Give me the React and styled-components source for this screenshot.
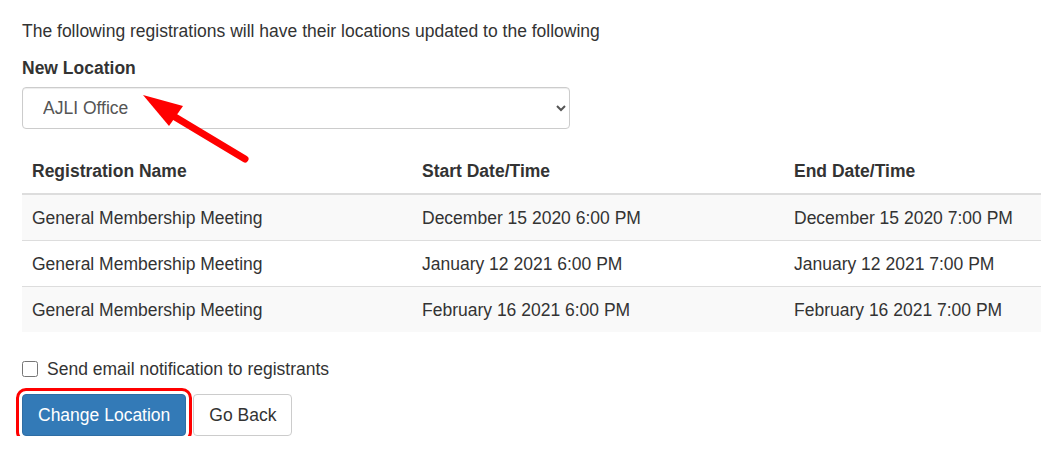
import React from "react";
import styled, { createGlobalStyle } from "styled-components";

const GlobalStyle = createGlobalStyle`
  html, body {
    margin: 0;
    background: #fff;
    color: #333;
    font-family: "Liberation Sans", Arial, Helvetica, sans-serif;
    font-size: 17.5px;
    line-height: 24px;
  }
`;

const Page = styled.div`
  position: relative;
  padding: 19px 0 0 22px;
  overflow: hidden;
`;

const Intro = styled.p`
  margin: 0 0 13px;
`;

const FormGroup = styled.div`
  margin-bottom: 18px;
`;

const Label = styled.label`
  display: block;
  font-weight: 700;
  margin-bottom: 7px;
`;

const Select = styled.select`
  display: block;
  width: 548px;
  height: 42px;
  padding: 0 12px 0 16px;
  border: 1px solid #ccc;
  border-radius: 4px;
  background: #fff;
  color: #555;
  font-family: inherit;
  font-size: 17.5px;
  box-shadow: inset 0 1px 1px rgba(0, 0, 0, 0.075);
`;

const Table = styled.table`
  width: 1060px;
  border-collapse: collapse;
  border-spacing: 0;
  margin-bottom: 25px;
  table-layout: fixed;
`;

const Th = styled.th`
  width: ${(p) => p.w || "auto"};
  text-align: left;
  font-weight: 700;
  padding: 12px 10px 10px;
  border-bottom: 2px solid #ddd;
  vertical-align: bottom;
`;

const Row = styled.tr`
  background: ${(p) => (p.striped ? "#f9f9f9" : "#fff")};
`;

const Td = styled.td`
  padding: 11px 10px 10px;
  border-top: ${(p) => (p.first ? "none" : "1px solid #ddd")};
  white-space: nowrap;
`;

const CheckRow = styled.label`
  display: flex;
  align-items: center;
  gap: 9px;
  margin-bottom: 13px;
`;

const Checkbox = styled.input`
  width: 16px;
  height: 16px;
  margin: 0;
`;

const Actions = styled.div`
  display: flex;
  gap: 7px;
`;

const Button = styled.button`
  height: 42px;
  padding: 0 15px;
  font-family: inherit;
  font-size: 17.5px;
  line-height: 24px;
  border-radius: 4px;
  border: 1px solid ${(p) => (p.primary ? "#2e6da4" : "#ccc")};
  background: ${(p) => (p.primary ? "#337ab7" : "#fff")};
  color: ${(p) => (p.primary ? "#fff" : "#333")};
  cursor: pointer;
  outline: ${(p) => (p.highlight ? "3px solid #f00" : "none")};
  outline-offset: 3px;
`;

const Arrow = styled.svg`
  position: absolute;
  left: 0;
  top: 0;
  pointer-events: none;
`;

const rows = [
  ["General Membership Meeting", "December 15 2020 6:00 PM", "December 15 2020 7:00 PM"],
  ["General Membership Meeting", "January 12 2021 6:00 PM", "January 12 2021 7:00 PM"],
  ["General Membership Meeting", "February 16 2021 6:00 PM", "February 16 2021 7:00 PM"],
];

const App = () => {
  return (
    <Page>
      <GlobalStyle />
      <Intro>The following registrations will have their locations updated to the following</Intro>
      <FormGroup>
        <Label htmlFor="loc">New Location</Label>
        <Select id="loc" defaultValue="ajli">
          <option value="ajli">AJLI Office</option>
        </Select>
      </FormGroup>
      <Table>
        <thead>
          <tr>
            <Th w="370px">Registration Name</Th>
            <Th w="352px">Start Date/Time</Th>
            <Th>End Date/Time</Th>
          </tr>
        </thead>
        <tbody>
          {rows.map((r, i) => (
            <Row key={i} striped={i % 2 === 0}>
              <Td first={i === 0}>{r[0]}</Td>
              <Td first={i === 0}>{r[1]}</Td>
              <Td first={i === 0}>{r[2]}</Td>
            </Row>
          ))}
        </tbody>
      </Table>
      <CheckRow>
        <Checkbox type="checkbox" />
        Send email notification to registrants
      </CheckRow>
      <Actions>
        <Button primary highlight>Change Location</Button>
        <Button>Go Back</Button>
      </Actions>
      <Arrow width="300" height="200">
        <line x1="175" y1="117" x2="245" y2="159" stroke="#f00" strokeWidth="7" strokeLinecap="round" />
        <polygon points="143,95 183,106 169,126" fill="#f00" />
      </Arrow>
    </Page>
  );
};

export default App;
